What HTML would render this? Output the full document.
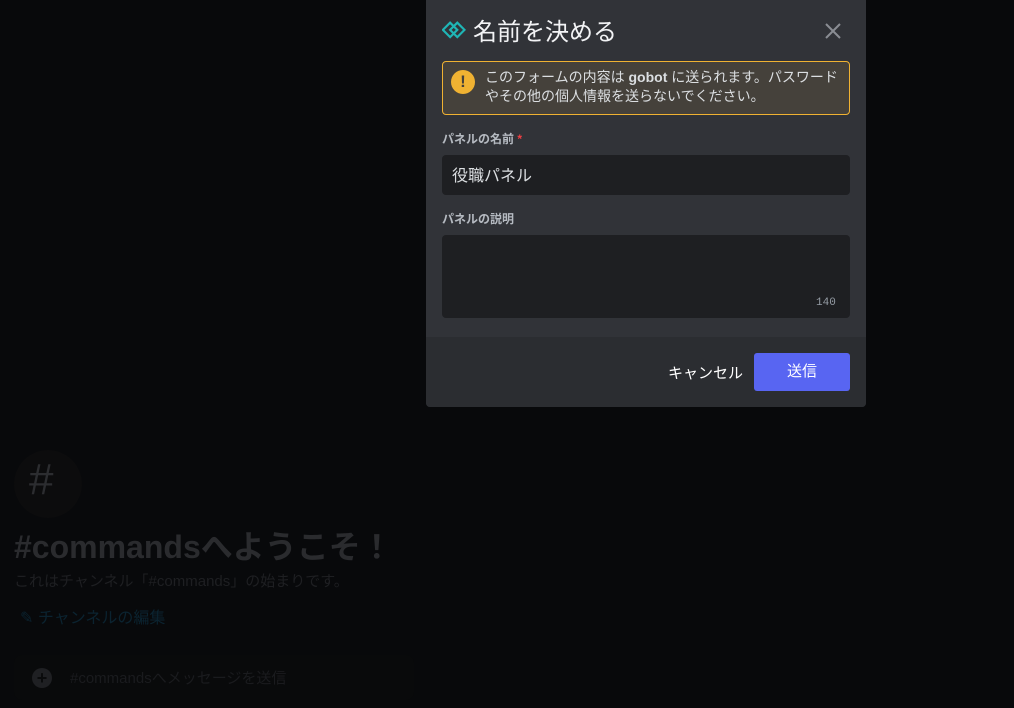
<!DOCTYPE html>
<html><head><meta charset="utf-8"><style>
*{margin:0;padding:0;box-sizing:border-box}
body{width:1014px;height:708px;background:#08090b;position:relative;overflow:hidden;font-family:"Liberation Sans","Noto Sans CJK JP",sans-serif}
.bg{position:absolute;color:#2a2b2e}
.modal{position:absolute;left:426px;top:0;width:440px;height:407px;background:#313338;border-radius:0 0 4px 4px;overflow:hidden}
.foot{position:absolute;left:0;top:337px;width:440px;height:70px;background:#2b2d31}
.abs{position:absolute}
</style></head><body>
<div class="bg" style="left:14px;top:450px;width:68px;height:68px;border-radius:50%;background:#0c0c0d"></div>
<div class="bg" style="left:29px;top:455px;font-size:44px;color:#2c2d30">#</div>
<div class="bg" style="left:14px;top:522px;font-size:32px;font-weight:bold;color:#2a2b2e">#commandsへようこそ！</div>
<div class="bg" style="left:14px;top:570px;font-size:15px;color:#1e1f22">これはチャンネル「#commands」の始まりです。</div>
<div class="bg" style="left:20px;top:604px;font-size:16px;color:#0b2330">✎ チャンネルの編集</div>
<div class="bg" style="left:14px;top:655px;width:400px;height:45px;border-radius:8px;background:#090a0b"></div>
<div class="bg" style="left:32px;top:668px;width:20px;height:20px;border-radius:50%;background:#1f2023;color:#0a0b0c;font-size:18px;line-height:20px;text-align:center;font-weight:bold">+</div>
<div class="bg" style="left:70px;top:667px;font-size:15px;color:#1a1b1e">#commandsへメッセージを送信</div>

<div class="modal">
 <svg class="abs" style="left:16px;top:20px" width="24" height="20" viewBox="0 0 24 20"><path d="M8 2 L16 10 L8 18 L0 10 Z M16 2 L24 10 L16 18 L8 10 Z" fill="none" stroke="#1fb5b5" stroke-width="2.4" transform="scale(.9) translate(1,1)"/></svg>
 <div class="abs" style="left:47px;top:12px;font-size:24px;color:#f2f3f5">名前を決める</div>
 <svg class="abs" style="left:398px;top:22px" width="18" height="18" viewBox="0 0 18 18"><path d="M2 2L16 16M16 2L2 16" stroke="#8a8d93" stroke-width="2"/></svg>
 <div class="abs" style="left:16px;top:61px;width:408px;height:54px;border:1px solid #f0b232;border-radius:4px;background:#45413b"></div>
 <div class="abs" style="left:25px;top:70px;width:24px;height:24px;border-radius:50%;background:#f0b232;color:#45413b;font-weight:bold;font-size:17px;text-align:center;line-height:24px">!</div>
 <div class="abs" style="left:59px;top:68px;width:362px;font-size:14px;line-height:19px;color:#dbdee1">このフォームの内容は <b>gobot</b> に送られます。パスワードやその他の個人情報を送らないでください。</div>
 <div class="abs" style="left:16px;top:130px;font-size:12px;font-weight:bold;color:#b5bac1">パネルの名前 <span style="color:#f23f43">*</span></div>
 <div class="abs" style="left:16px;top:155px;width:408px;height:40px;background:#1e1f22;border-radius:4px"></div>
 <div class="abs" style="left:26px;top:162px;font-size:16px;color:#dbdee1">役職パネル</div>
 <div class="abs" style="left:16px;top:210px;font-size:12px;font-weight:bold;color:#b5bac1">パネルの説明</div>
 <div class="abs" style="left:16px;top:235px;width:408px;height:83px;background:#1e1f22;border-radius:4px"></div>
 <div class="abs" style="left:390px;top:297px;font-size:11px;font-family:'Liberation Mono',monospace;color:#949ba4">140</div>
 <div class="foot"></div>
 <div class="abs" style="left:242px;top:362px;font-size:15px;color:#fff">キャンセル</div>
 <div class="abs" style="left:328px;top:353px;width:96px;height:38px;background:#5865f2;border-radius:3px;color:#fff;font-size:15px;text-align:center;line-height:38px">送信</div>
</div>
</body></html>
